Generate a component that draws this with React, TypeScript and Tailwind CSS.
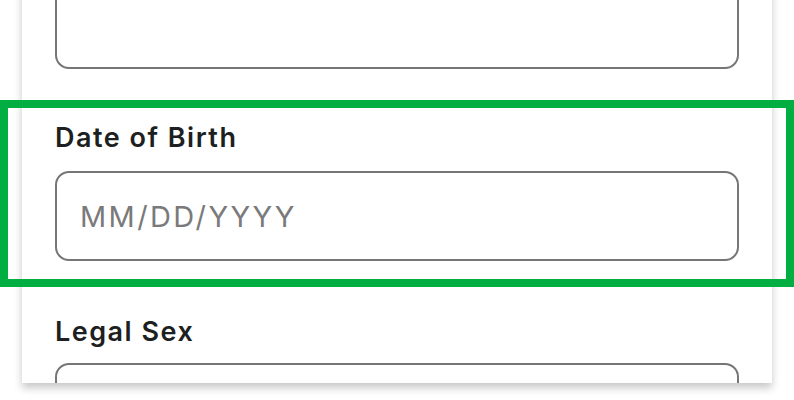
import React from "react";

const font = { fontFamily: "Inter, 'Noto Sans', sans-serif" };

export default function App() {
  return (
    <div className="relative w-[794px] h-[400px] overflow-hidden bg-white" style={font}>
      <div className="ml-[22px] mt-[-21px] w-[750px] h-[404px] overflow-hidden bg-white shadow-[0_5px_8px_rgba(0,0,0,0.22)] px-[33px]">
        <div className="h-[90px] rounded-[14px] border-2 border-[#767676]" />
        <div className="mt-[52px] text-[27px] leading-[33px] font-semibold tracking-[1.5px] text-[#1d1f21]">Date of Birth</div>
        <input
          className="mt-[17px] block w-full h-[90px] rounded-[14px] border-2 border-[#767676] pl-[23px] text-[29px] tracking-[2.4px] text-[#1d1f21] placeholder:text-[#7a7a7a] outline-none"
          placeholder="MM/DD/YYYY"
          style={font}
        />
        <div className="mt-[54px] text-[27px] leading-[33px] font-semibold tracking-[1.5px] text-[#1d1f21]">Legal Sex</div>
        <div className="mt-[15px] h-[90px] rounded-[14px] border-2 border-[#767676]" />
      </div>
      <div className="absolute left-0 top-[100px] w-[794px] h-[187px] border-[8px] border-[#00ae42] pointer-events-none" />
    </div>
  );
}
